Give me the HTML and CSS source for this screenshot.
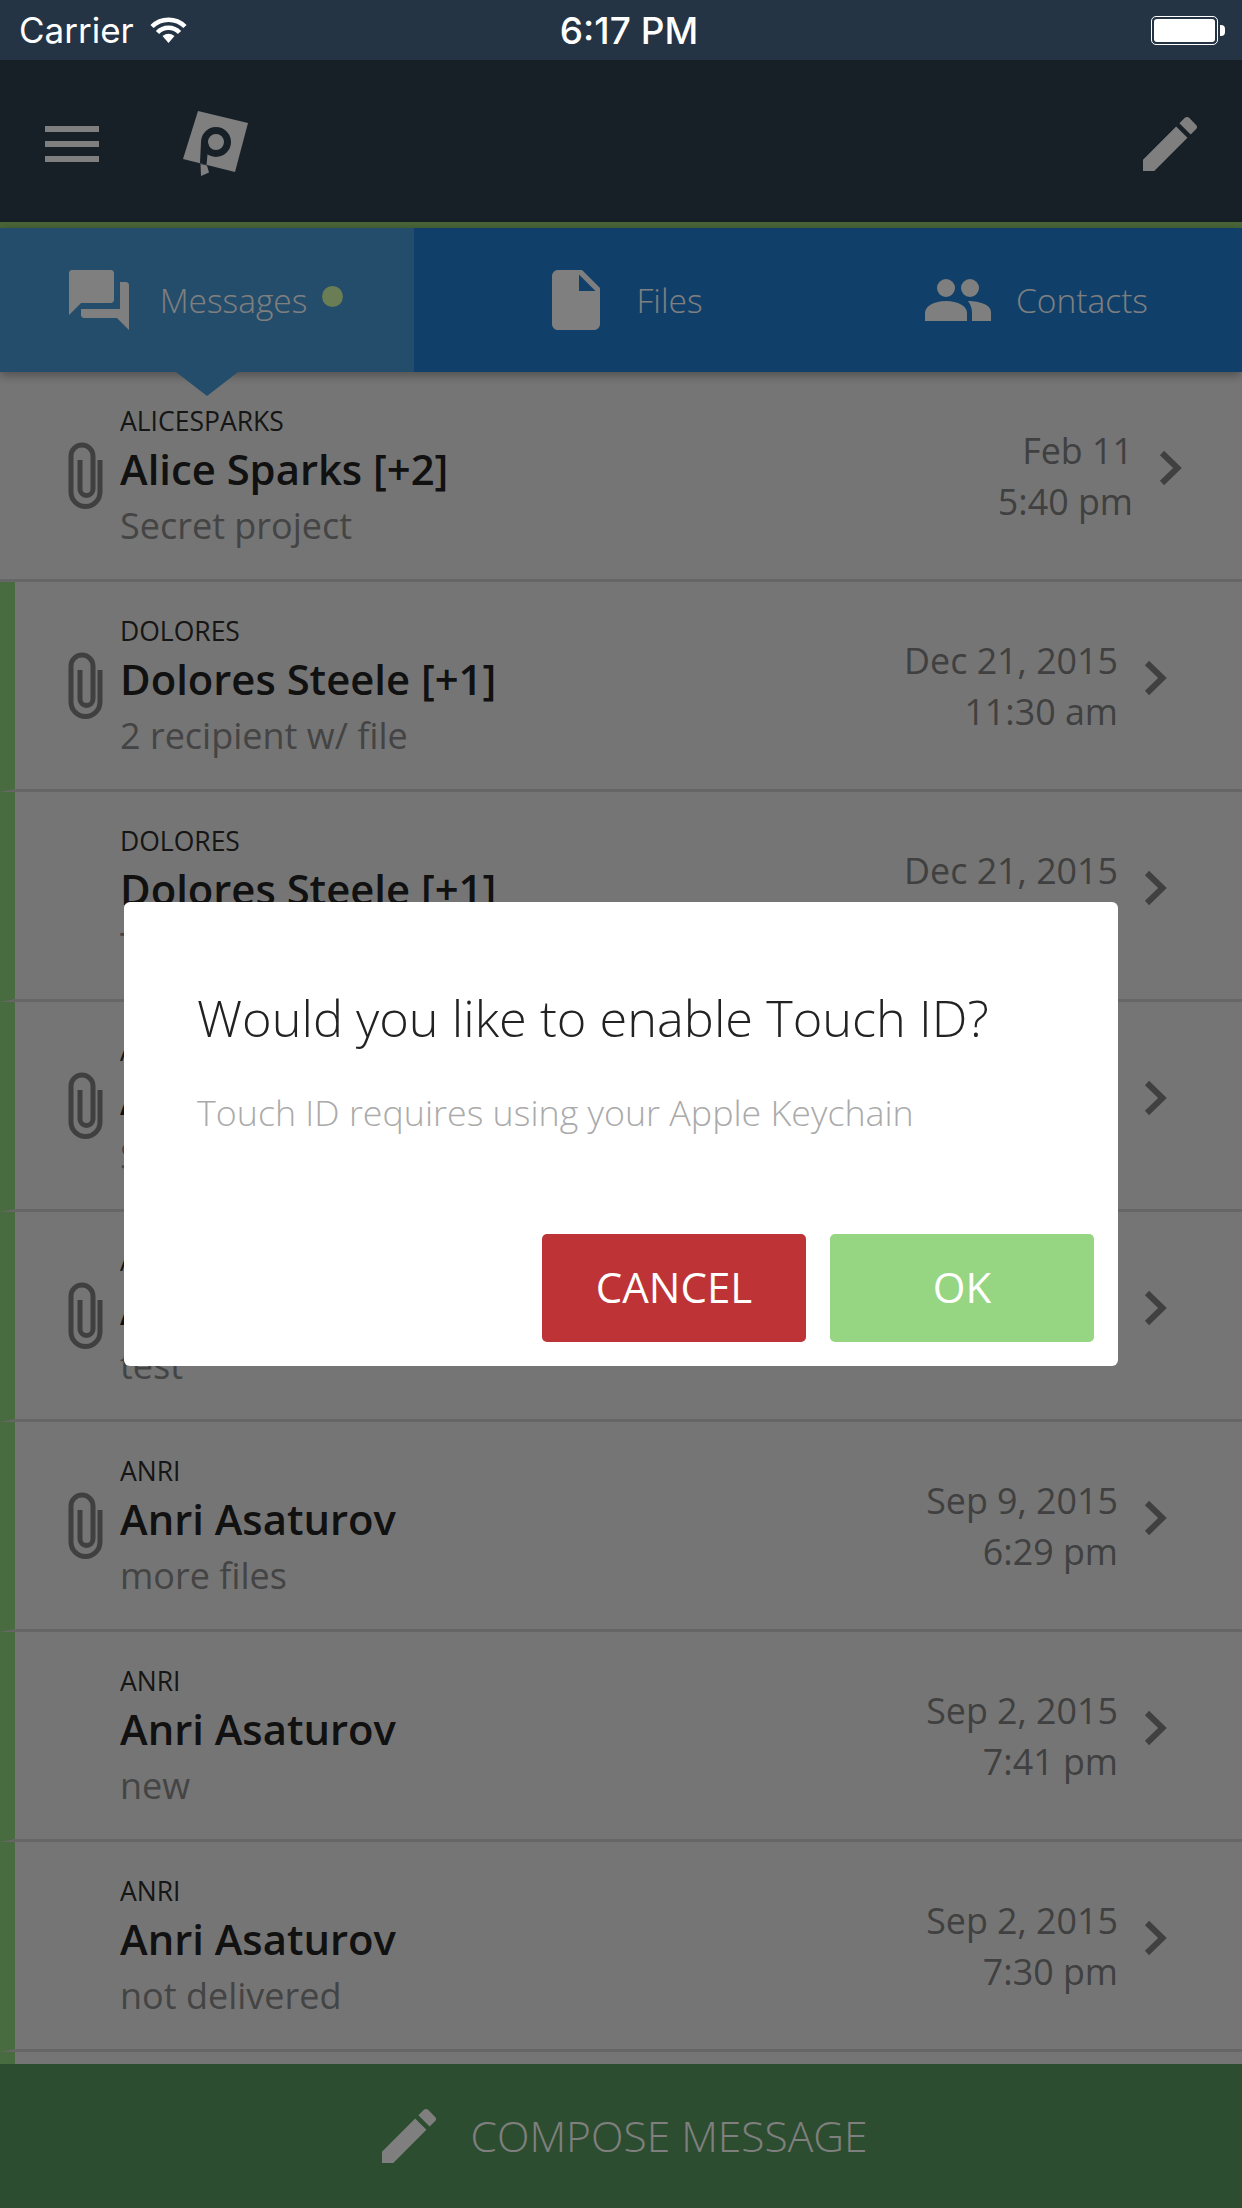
FILE: index.html
```html
<!DOCTYPE html>
<html lang="en">
<head>
    <meta charset="UTF-8">
    <meta name="viewport" content="width=device-width, initial-scale=1.0">
    <title>Messages</title>
    <link rel="stylesheet" href="styles.css">
</head>
<body>
    <div class="status-bar">
        <div class="status-left">
            <span>Carrier</span>
            <svg class="wifi" width="37" height="27" viewBox="0 0 37 27">
                <path d="M2 10.5A23.5 23.5 0 0 1 35 10.5M7.5 16.5A15 15 0 0 1 29.5 16.5" fill="none" stroke="#fff" stroke-width="4.5"/>
                <path d="M18.5 27L12.5 20Q18.5 15.5 24.5 20Z" fill="#fff"/>
            </svg>
        </div>
        <div class="status-time">6:17 PM</div>
        <div class="status-right">
            <div class="battery"><div class="battery-fill"></div></div>
            <div class="battery-nub"></div>
        </div>
    </div>

    <header class="nav">
        <div class="burger"><span></span><span></span><span></span></div>
        <svg class="logo" width="72" height="70" viewBox="0 0 72 70">
            <path d="M18 2L68 14L55 63L3 50Z" fill="#fff"/>
            <circle cx="36" cy="33" r="11.5" fill="none" stroke="#2e3e4e" stroke-width="7"/>
            <path d="M21 33L28.5 35L26.5 56L20 54Z" fill="#2e3e4e"/>
            <path d="M20.5 55L27 56.5L29 63.5L21 67Z" fill="#fff"/>
        </svg>
        <svg class="nav-pencil" width="72" height="72" viewBox="0 0 24 24"><path fill="#fff" d="M3 17.25V21h3.75L17.81 9.94l-3.75-3.75L3 17.25zM20.71 7.04c.39-.39.39-1.02 0-1.41l-2.34-2.34c-.39-.39-1.02-.39-1.41 0l-1.83 1.83 3.75 3.75 1.83-1.83z"/></svg>
    </header>

    <nav class="tabs">
        <div class="tab active">
            <svg width="72" height="72" viewBox="0 0 24 24"><path fill="#fff" d="M21 6h-2v9H6v2c0 .55.45 1 1 1h11l4 4V7c0-.55-.45-1-1-1zm-4 6V3c0-.55-.45-1-1-1H3c-.55 0-1 .45-1 1v14l4-4h10c.55 0 1-.45 1-1z"/></svg>
            <span>Messages</span>
            <i class="dot"></i>
        </div>
        <div class="tab">
            <svg width="72" height="72" viewBox="0 0 24 24"><path fill="#fff" d="M6 2c-1.1 0-1.99.9-1.99 2L4 20c0 1.1.89 2 1.99 2H18c1.1 0 2-.9 2-2V8l-6-6H6zm7 7V3.5L18.5 9H13z"/></svg>
            <span>Files</span>
        </div>
        <div class="tab">
            <svg width="66" height="42" viewBox="0 0 66 42">
                <ellipse cx="21" cy="9" rx="9" ry="9" fill="#fff"/>
                <ellipse cx="45" cy="9" rx="9" ry="9" fill="#fff"/>
                <path fill="#fff" d="M0 42v-8c0-7 9-12 21-12s21 5 21 12v8z"/>
                <path fill="#fff" d="M47 42v-8c0-4-1-8-4-12c12 0 23 4 23 11v9z"/>
            </svg>
            <span>Contacts</span>
        </div>
    </nav>

    <main class="list">
        <div class="row">
            <svg class="clip" width="40" height="70" viewBox="0 0 40 70"><path d="M34 18V50A14.5 14.5 0 0 1 5 50V14A11 11 0 0 1 27 14V47A6.5 6.5 0 0 1 14 47V18"/></svg>
            <div class="info">
                <div class="user">ALICESPARKS</div>
                <div class="name">Alice Sparks [+2]</div>
                <div class="subject">Secret project</div>
            </div>
            <div class="date">Feb 11<br>5:40 pm</div>
            <svg class="chevron" width="28" height="40" viewBox="0 0 28 40"><path d="M6 5L21.5 20L6 35"/></svg>
        </div>
        <div class="row unread">
            <svg class="clip" width="40" height="70" viewBox="0 0 40 70"><path d="M34 18V50A14.5 14.5 0 0 1 5 50V14A11 11 0 0 1 27 14V47A6.5 6.5 0 0 1 14 47V18"/></svg>
            <div class="info">
                <div class="user">DOLORES</div>
                <div class="name">Dolores Steele [+1]</div>
                <div class="subject">2 recipient w/ file</div>
            </div>
            <div class="date">Dec 21, 2015<br>11:30 am</div>
            <svg class="chevron" width="28" height="40" viewBox="0 0 28 40"><path d="M6 5L21.5 20L6 35"/></svg>
        </div>
        <div class="row unread">
            <div class="no-clip"></div>
            <div class="info">
                <div class="user">DOLORES</div>
                <div class="name">Dolores Steele [+1]</div>
                <div class="subject">Test</div>
            </div>
            <div class="date">Dec 21, 2015</div>
            <svg class="chevron" width="28" height="40" viewBox="0 0 28 40"><path d="M6 5L21.5 20L6 35"/></svg>
        </div>
        <div class="row unread">
            <svg class="clip" width="40" height="70" viewBox="0 0 40 70"><path d="M34 18V50A14.5 14.5 0 0 1 5 50V14A11 11 0 0 1 27 14V47A6.5 6.5 0 0 1 14 47V18"/></svg>
            <div class="info">
                <div class="user">ANRI</div>
                <div class="name">Anri Asaturov</div>
                <div class="subject">Secret</div>
            </div>
            <svg class="chevron" width="28" height="40" viewBox="0 0 28 40"><path d="M6 5L21.5 20L6 35"/></svg>
        </div>
        <div class="row unread">
            <svg class="clip" width="40" height="70" viewBox="0 0 40 70"><path d="M34 18V50A14.5 14.5 0 0 1 5 50V14A11 11 0 0 1 27 14V47A6.5 6.5 0 0 1 14 47V18"/></svg>
            <div class="info">
                <div class="user">ANRI</div>
                <div class="name">Anri Asaturov</div>
                <div class="subject">test</div>
            </div>
            <svg class="chevron" width="28" height="40" viewBox="0 0 28 40"><path d="M6 5L21.5 20L6 35"/></svg>
        </div>
        <div class="row unread">
            <svg class="clip" width="40" height="70" viewBox="0 0 40 70"><path d="M34 18V50A14.5 14.5 0 0 1 5 50V14A11 11 0 0 1 27 14V47A6.5 6.5 0 0 1 14 47V18"/></svg>
            <div class="info">
                <div class="user">ANRI</div>
                <div class="name">Anri Asaturov</div>
                <div class="subject">more files</div>
            </div>
            <div class="date">Sep 9, 2015<br>6:29 pm</div>
            <svg class="chevron" width="28" height="40" viewBox="0 0 28 40"><path d="M6 5L21.5 20L6 35"/></svg>
        </div>
        <div class="row unread">
            <div class="no-clip"></div>
            <div class="info">
                <div class="user">ANRI</div>
                <div class="name">Anri Asaturov</div>
                <div class="subject">new</div>
            </div>
            <div class="date">Sep 2, 2015<br>7:41 pm</div>
            <svg class="chevron" width="28" height="40" viewBox="0 0 28 40"><path d="M6 5L21.5 20L6 35"/></svg>
        </div>
        <div class="row unread">
            <div class="no-clip"></div>
            <div class="info">
                <div class="user">ANRI</div>
                <div class="name">Anri Asaturov</div>
                <div class="subject">not delivered</div>
            </div>
            <div class="date">Sep 2, 2015<br>7:30 pm</div>
            <svg class="chevron" width="28" height="40" viewBox="0 0 28 40"><path d="M6 5L21.5 20L6 35"/></svg>
        </div>
        <div class="row unread"></div>
    </main>

    <footer class="compose">
        <svg width="72" height="72" viewBox="0 0 24 24"><path fill="#fff" d="M3 17.25V21h3.75L17.81 9.94l-3.75-3.75L3 17.25zM20.71 7.04c.39-.39.39-1.02 0-1.41l-2.34-2.34c-.39-.39-1.02-.39-1.41 0l-1.83 1.83 3.75 3.75 1.83-1.83z"/></svg>
        <span>COMPOSE MESSAGE</span>
    </footer>

    <div class="overlay">
        <div class="modal">
            <h2>Would you like to enable Touch ID?</h2>
            <p>Touch ID requires using your Apple Keychain</p>
            <div class="modal-buttons">
                <button class="btn-cancel">CANCEL</button>
                <button class="btn-ok">OK</button>
            </div>
        </div>
    </div>
</body>
</html>
```

FILE: styles.css
```css
* {
    box-sizing: border-box;
}
body {
    font-family: "Open Sans", sans-serif;
    margin: 0;
    width: 1242px;
    height: 2208px;
    overflow: hidden;
    display: flex;
    flex-direction: column;
    background-color: #ebebeb;
}

/* status bar stays above the dim layer */
.status-bar {
    height: 60px;
    flex: none;
    display: grid;
    grid-template-columns: 1fr auto 1fr;
    align-items: center;
    padding: 0 17px 0 19px;
    background-color: #243444;
    color: #fff;
    font-family: Inter, sans-serif;
    font-size: 35px;
}
.status-left {
    display: flex;
    align-items: center;
    gap: 16px;
}
.wifi {
    margin-top: -2px;
}
.status-time {
    margin-left: 14px;
    font-weight: 500;
    font-size: 37px;
}
.status-right {
    display: flex;
    align-items: center;
    justify-content: flex-end;
    gap: 2px;
}
.battery {
    width: 67px;
    height: 29px;
    padding: 2px;
    border: 1px solid #fff;
    border-radius: 5px;
}
.battery-fill {
    height: 100%;
    background-color: #fff;
    border-radius: 3px;
}
.battery-nub {
    width: 5px;
    height: 11px;
    background-color: #fff;
    border-radius: 0 4px 4px 0;
}

.nav {
    height: 168px;
    flex: none;
    display: flex;
    align-items: center;
    padding: 6px 36px 0 45px;
    background-color: #2e3e4e;
    border-bottom: 6px solid #94cc70;
}
.burger {
    width: 54px;
    display: flex;
    flex-direction: column;
    gap: 9px;
}
.burger span {
    height: 6px;
    background-color: #fff;
}
.logo {
    margin-left: 81px;
}
.nav-pencil {
    margin-left: auto;
}

.tabs {
    height: 144px;
    flex: none;
    display: flex;
    position: relative;
    z-index: 1;
    background-color: #2080d4;
    box-shadow: 0 3px 10px rgba(0,0,0,0.35);
    color: #fff;
    font-size: 33.5px;
    font-weight: 300;
}
.tab {
    flex: 0 0 414px;
    display: flex;
    align-items: center;
    justify-content: center;
    gap: 25px;
    position: relative;
}
.tab:last-child {
    padding-left: 3px;
}
.tab.active {
    background-color: #489ad6;
    padding-right: 8px;
}
.tab.active::after {
    content: "";
    position: absolute;
    left: 176px;
    top: 100%;
    border-left: 31px solid transparent;
    border-right: 31px solid transparent;
    border-top: 24px solid #489ad6;
}
.dot {
    width: 21px;
    height: 21px;
    margin: -8px 0 0 -10px;
    border-radius: 50%;
    background-color: #d4faaa;
}

.list {
    flex: 1;
    overflow: hidden;
}
.row {
    height: 210px;
    display: flex;
    align-items: flex-start;
    padding: 0 58px 0 66px;
    border-bottom: 3px solid #cccccc;
}
.row.unread {
    border-left: 15px solid #90d680;
    padding: 0 73px 0 51px;
}
.clip {
    flex: none;
    margin: 70px 14px 0 0;
}
.clip path {
    fill: none;
    stroke: #808080;
    stroke-width: 5;
}
.no-clip {
    flex: none;
    width: 54px;
}
.info {
    flex: 1;
    margin-top: 31px;
}
.user {
    font-size: 26.5px;
    line-height: 36px;
    color: #2c2c2c;
}
.name {
    font-size: 41.8px;
    line-height: 60px;
    font-weight: 600;
    color: #222;
}
.subject {
    font-size: 36px;
    line-height: 54px;
    color: #888;
}
.date {
    margin-top: 53px;
    font-size: 35.8px;
    line-height: 51px;
    text-align: right;
    color: #808080;
}
.chevron {
    flex: none;
    margin: 76px 0 0 23px;
}
.chevron path {
    fill: none;
    stroke: #808080;
    stroke-width: 6;
}

.compose {
    height: 144px;
    flex: none;
    display: flex;
    align-items: center;
    justify-content: center;
    gap: 26px;
    padding-right: 2px;
    background-color: #589a5e;
    color: #fff;
    font-size: 42.5px;
    font-weight: 300;
}
.compose span {
    margin-top: -2px;
}

/* dim layer + dialog */
.overlay {
    position: absolute;
    top: 60px;
    left: 0;
    right: 0;
    bottom: 0;
    z-index: 2;
    display: flex;
    justify-content: center;
    align-items: flex-start;
    padding-top: 842px;
    background-color: rgba(0,0,0,0.5);
}
.modal {
    width: 994px;
    height: 464px;
    padding: 0 24px;
    background-color: #fff;
    border-radius: 6px;
}
.modal h2 {
    margin: 84px 0 0 49px;
    font-size: 50.5px;
    line-height: 64px;
    font-weight: 300;
    color: #222;
}
.modal p {
    margin: 37px 0 0 49px;
    font-size: 35.8px;
    line-height: 50px;
    font-weight: 300;
    color: #aaa;
}
.modal-buttons {
    display: flex;
    justify-content: flex-end;
    gap: 24px;
    margin-top: 97px;
}
.modal-buttons button {
    width: 264px;
    height: 108px;
    padding: 0 0 4px;
    border: none;
    border-radius: 5px;
    color: #fff;
    font-family: "Open Sans", sans-serif;
    font-size: 42px;
}
.btn-cancel {
    background-color: #bd3336;
}
.btn-ok {
    background-color: #96d682;
}
```
